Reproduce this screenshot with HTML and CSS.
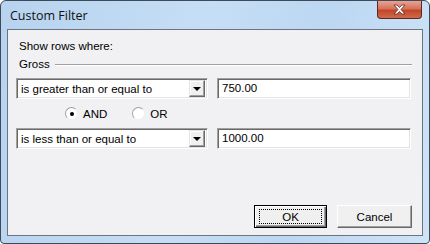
FILE: index.html
```html
<!DOCTYPE html>
<html lang="en">
<head>
  <meta charset="UTF-8" />
  <title>Custom Filter</title>
  <link rel="stylesheet" href="styles.css">
</head>
<body>
  <div class="window">
    <div class="titlebar">
      <span class="title">Custom Filter</span>
      <div class="close">
        <svg width="13" height="11" viewBox="0 0 13 11">
          <path d="M1 1 L4 1 L6.5 3.5 L9 1 L12 1 L8 5.5 L12 10 L9 10 L6.5 7.5 L4 10 L1 10 L5 5.5 Z" fill="#fff" stroke="#5a2a20" stroke-width="0.8"/>
        </svg>
      </div>
    </div>

    <div class="client">
      <div class="caption">Show rows where:</div>

      <div class="group">
        <span class="legend">Gross</span>
        <span class="etch"></span>
      </div>

      <div class="row">
        <div class="combo">
          <span class="value">is greater than or equal to</span>
          <span class="drop"><span class="arrow"></span></span>
        </div>
        <div class="field">750.00</div>
      </div>

      <div class="radios">
        <label class="radio"><span class="circle checked"></span>AND</label>
        <label class="radio"><span class="circle"></span>OR</label>
      </div>

      <div class="row">
        <div class="combo">
          <span class="value">is less than or equal to</span>
          <span class="drop"><span class="arrow"></span></span>
        </div>
        <div class="field">1000.00</div>
      </div>

      <div class="buttons">
        <div class="btn default"><span class="focus">OK</span></div>
        <div class="btn">Cancel</div>
      </div>
    </div>
  </div>
</body>
</html>
```

FILE: styles.css
```css
body { margin: 0; font-family: "Liberation Sans", Arial, sans-serif; font-size: 11.5px; color: #000; background: #fff; }

.window {
  width: 430px; height: 244px; box-sizing: border-box;
  border: 1px solid #3c4a5a; border-radius: 6px 6px 4px 4px;
  background: linear-gradient(100deg, #b7d3ef 0%, #c6def5 45%, #bcd7f2 70%, #cfe3f7 100%);
  display: flex; flex-direction: column;
}

.titlebar { height: 28px; display: flex; align-items: flex-start; }
.title { font-family: "Open Sans", "DejaVu Sans", sans-serif; font-size: 12.5px; margin: 6px 0 0 9px; color: #111; }
.close {
  margin-left: auto; margin-right: 7px; width: 45px; height: 18px; box-sizing: border-box;
  border: 1px solid #5a2a20; border-top: none; border-radius: 0 0 4px 4px;
  background: linear-gradient(#e8a493 0%, #d7725c 45%, #c14628 55%, #d06a4c 100%);
  display: flex; align-items: center; justify-content: center;
}

.client {
  flex: 1; margin: 0 6px 7px 6px; border: 1px solid #6b7480;
  background: #f1f0f3; padding: 10px 10px 0 8px;
  display: flex; flex-direction: column;
}

.caption { margin-left: 3px; height: 13px; line-height: 13px; }

.group { display: flex; align-items: center; margin-top: 5px; height: 13px; }
.legend { margin-left: 3px; padding-right: 5px; line-height: 13px; }
.etch { flex: 1; border-top: 1px solid #a0a0a0; border-bottom: 1px solid #fff; margin-top: 1px; }

.row { display: flex; gap: 9px; margin-top: 7px; }

.combo, .field {
  height: 21px; box-sizing: border-box; background: #fff;
  border: 1px solid; border-color: #a0a0a0 #fff #fff #a0a0a0;
  box-shadow: inset 1px 1px 0 #696969, inset -1px -1px 0 #e3e3e3;
}
.combo { width: 192px; display: flex; align-items: center; padding: 0 2px 0 4px; }
.combo .value { flex: 1; }
.drop {
  width: 16px; height: 17px; box-sizing: border-box; background: #f0f0f0;
  border: 1px solid; border-color: #e3e3e3 #696969 #696969 #e3e3e3;
  box-shadow: inset -1px -1px 0 #a0a0a0, inset 1px 1px 0 #fff;
  display: flex; align-items: center; justify-content: center;
}
.arrow { width: 0; height: 0; border-left: 4px solid transparent; border-right: 4px solid transparent; border-top: 4px solid #000; margin-top: 1px; }
.field { width: 194px; padding: 0 4px; line-height: 19px; }

.radios { display: flex; gap: 25px; height: 15px; margin: 7px 0 0 49px; align-items: center; }
.radio { display: flex; align-items: center; gap: 5px; }
.circle {
  width: 13px; height: 13px; box-sizing: border-box; border-radius: 50%; background: #fff;
  border: 1px solid; border-color: #a0a0a0 #f0f0f0 #f0f0f0 #a0a0a0;
  display: flex; align-items: center; justify-content: center;
}
.circle.checked::after { content: ""; width: 4px; height: 4px; border-radius: 50%; background: #000; }

.buttons { display: flex; justify-content: flex-end; gap: 10px; margin-top: auto; margin-bottom: 7px; }
.btn {
  width: 75px; height: 23px; box-sizing: border-box; background: #f0f0f0;
  border: 1px solid; border-color: #fff #696969 #696969 #fff;
  box-shadow: inset -1px -1px 0 #a0a0a0;
  display: flex; align-items: center; justify-content: center;
}
.btn.default { width: 73px; border: 1px solid #000; box-shadow: inset 1px 1px 0 #fff, inset -1px -1px 0 #696969, inset -2px -2px 0 #a0a0a0; }
.focus { width: 63px; height: 15px; box-sizing: border-box; border: 1px dotted #000; display: flex; align-items: center; justify-content: center; }
```
